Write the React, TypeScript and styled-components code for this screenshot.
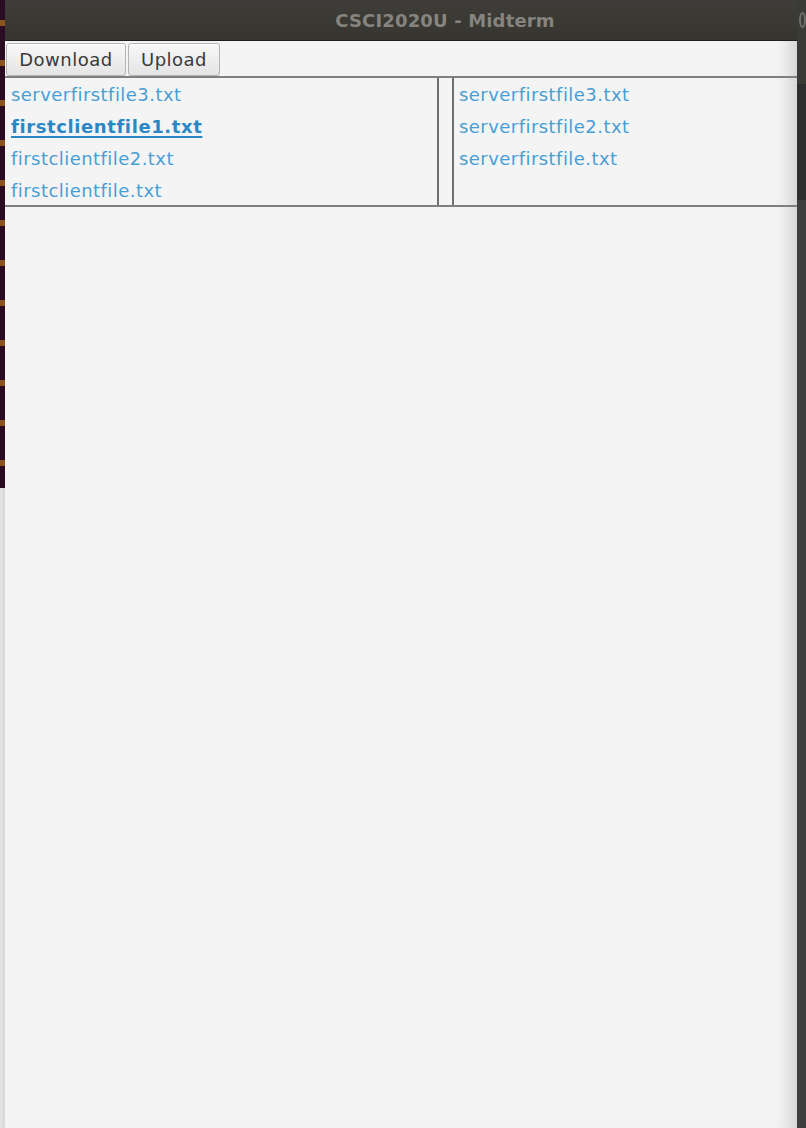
import React from "react";
import styled, { createGlobalStyle } from "styled-components";

const GlobalStyle = createGlobalStyle`
  html, body {
    margin: 0;
    padding: 0;
    background: #3a3a3a;
  }
  body {
    font-family: "DejaVu Sans", "Open Sans", sans-serif;
  }
`;

const clientFiles = [
  { name: "serverfirstfile3.txt", selected: false },
  { name: "firstclientfile1.txt", selected: true },
  { name: "firstclientfile2.txt", selected: false },
  { name: "firstclientfile.txt", selected: false },
];

const serverFiles = [
  { name: "serverfirstfile3.txt", selected: false },
  { name: "serverfirstfile2.txt", selected: false },
  { name: "serverfirstfile.txt", selected: false },
];

const Desktop = styled.div`
  display: flex;
  width: 806px;
  height: 1128px;
  overflow: hidden;
`;

const LeftStrip = styled.div`
  width: 5px;
  display: flex;
  flex-direction: column;
`;

const Wallpaper = styled.div`
  height: 488px;
  background: repeating-linear-gradient(
    180deg,
    #2a0b22 0px,
    #2a0b22 20px,
    #8a5320 20px,
    #8a5320 26px,
    #2a0b22 26px,
    #2a0b22 40px
  );
`;

const Backdrop = styled.div`
  flex: 1;
  background: linear-gradient(90deg, #e6e6e6, #d6d6d6);
`;

const RightStrip = styled.div`
  width: 9px;
  background: #3d3d3d;
  display: flex;
  flex-direction: column;
`;

const RightTop = styled.div`
  height: 84px;
  background: #3a3a37;
  display: flex;
  align-items: flex-start;
  padding-top: 12px;
  box-sizing: border-box;
`;

/* the edge of a neighbouring window's round button */
const PeekArc = styled.div`
  width: 14px;
  height: 16px;
  margin-left: 2px;
  border-radius: 50%;
  border: 2px solid #6e6e6a;
  box-sizing: border-box;
`;

const RightMid = styled.div`
  height: 116px;
  background: #2e2e2e;
`;

const RightRest = styled.div`
  flex: 1;
  background: #3e3e3e;
`;

const Window = styled.div`
  flex: 1;
  display: flex;
  flex-direction: column;
  background: #f4f4f4;
  box-shadow: inset -20px 0 18px -14px rgba(0, 0, 0, 0.16);
`;

const TitleBar = styled.div`
  height: 41px;
  display: flex;
  align-items: center;
  justify-content: center;
  background: linear-gradient(#3e3d39, #36352f);
  border-bottom: 1px solid #1e1e1c;
  box-sizing: border-box;
  padding-left: 88px;
`;

const Title = styled.span`
  color: #85847e;
  font-weight: 700;
  font-size: 18px;
  letter-spacing: 0.15px;
`;

const Toolbar = styled.div`
  height: 35px;
  display: flex;
  align-items: flex-start;
  gap: 2px;
  padding: 2px 0 0 1px;
  box-sizing: border-box;
`;

const Button = styled.button<{ $width: number }>`
  width: ${(p) => p.$width}px;
  height: 33px;
  padding: 0;
  border: 1px solid #b4b4b4;
  border-radius: 3px;
  background: linear-gradient(#f8f8f8, #e4e4e4);
  color: #3a3a3a;
  font-family: "DejaVu Sans", "Open Sans", sans-serif;
  font-size: 18px;
  letter-spacing: 0.5px;
  box-shadow: inset 0 1px 0 #ffffff;
`;

const Lists = styled.div`
  display: flex;
  height: 131px;
  border-top: 2px solid #7f7f7f;
  border-bottom: 2px solid #7f7f7f;
  box-sizing: border-box;
`;

const FileList = styled.ul<{ $width?: number; $indent: number }>`
  list-style: none;
  margin: 0;
  padding: 0 0 0 ${(p) => p.$indent}px;
  ${(p) => (p.$width ? `width: ${p.$width}px;` : "flex: 1;")}
  box-sizing: border-box;
`;

const FileItem = styled.li<{ $selected: boolean }>`
  height: 32px;
  line-height: 33px;
  font-size: 18px;
  letter-spacing: ${(p) => (p.$selected ? 0.6 : 0.45)}px;
  color: ${(p) => (p.$selected ? "#2a87c6" : "#479fd6")};
  font-weight: ${(p) => (p.$selected ? 700 : 400)};
  text-decoration: ${(p) => (p.$selected ? "underline" : "none")};
  text-underline-offset: 3px;
  text-decoration-thickness: 2px;
  white-space: nowrap;
`;

const Divider = styled.div`
  width: 17px;
  border-left: 2px solid #6f6f6f;
  border-right: 2px solid #6f6f6f;
  box-sizing: border-box;
`;

const Empty = styled.div`
  flex: 1;
`;

const App = () => {
  return (
    <>
      <GlobalStyle />
      <Desktop>
        <LeftStrip>
          <Wallpaper />
          <Backdrop />
        </LeftStrip>
        <Window>
          <TitleBar>
            <Title>CSCI2020U - Midterm</Title>
          </TitleBar>
          <Toolbar>
            <Button $width={120}>Download</Button>
            <Button $width={92}>Upload</Button>
          </Toolbar>
          <Lists>
            <FileList $width={432} $indent={6}>
              {clientFiles.map((f) => (
                <FileItem key={f.name} $selected={f.selected}>
                  {f.name}
                </FileItem>
              ))}
            </FileList>
            <Divider />
            <FileList $indent={5}>
              {serverFiles.map((f) => (
                <FileItem key={f.name} $selected={f.selected}>
                  {f.name}
                </FileItem>
              ))}
            </FileList>
          </Lists>
          <Empty />
        </Window>
        <RightStrip>
          <RightTop>
            <PeekArc />
          </RightTop>
          <RightMid />
          <RightRest />
        </RightStrip>
      </Desktop>
    </>
  );
};

export default App;
